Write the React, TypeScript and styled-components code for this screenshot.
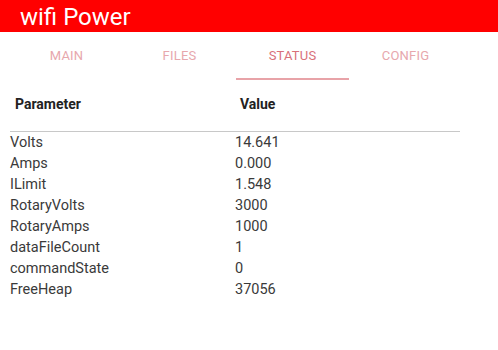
import styled, { createGlobalStyle } from "styled-components";

const GlobalStyle = createGlobalStyle`
  body {
    margin: 0;
    background: #ffffff;
    font-family: Roboto, "Noto Sans", Arial, sans-serif;
  }
`;

const TABS = ["MAIN", "FILES", "STATUS", "CONFIG"];
const ACTIVE = "STATUS";

const ROWS: [string, string][] = [
  ["Volts", "14.641"],
  ["Amps", "0.000"],
  ["ILimit", "1.548"],
  ["RotaryVolts", "3000"],
  ["RotaryAmps", "1000"],
  ["dataFileCount", "1"],
  ["commandState", "0"],
  ["FreeHeap", "37056"],
];

const App = () => {
  return (
    <Page>
      <GlobalStyle />
      <TitleBar>wifi Power</TitleBar>
      <TabBar>
        {TABS.map((t) => (
          <Tab key={t} $active={t === ACTIVE}>
            {t}
          </Tab>
        ))}
      </TabBar>
      <Table>
        <HeadRow>
          <HeadCell>Parameter</HeadCell>
          <HeadCell>Value</HeadCell>
        </HeadRow>
        {ROWS.map(([name, value]) => (
          <Row key={name}>
            <Cell>{name}</Cell>
            <Cell>{value}</Cell>
          </Row>
        ))}
      </Table>
    </Page>
  );
};

export default App;

const Page = styled.div`
  width: 498px;
  height: 350px;
  background: #ffffff;
`;

const TitleBar = styled.div`
  height: 32px;
  background: #ff0000;
  color: #ffffff;
  font-size: 24px;
  line-height: 34px;
  padding-left: 20px;
  box-sizing: border-box;
  overflow: hidden;
`;

const TabBar = styled.div`
  display: flex;
  padding-left: 10px;
  height: 48px;
`;

const Tab = styled.div<{ $active: boolean }>`
  width: 113px;
  display: flex;
  align-items: center;
  justify-content: center;
  box-sizing: border-box;
  font-size: 13px;
  letter-spacing: 0.2px;
  color: ${(p) => (p.$active ? "#d9707a" : "#e7a7ad")};
  border-bottom: 2px solid
    ${(p) => (p.$active ? "#e8a3a8" : "transparent")};
`;

const Table = styled.div`
  width: 450px;
  margin-left: 10px;
  margin-top: 11px;
`;

const HeadRow = styled.div`
  display: grid;
  grid-template-columns: 225px 1fr;
  height: 41px;
  box-sizing: border-box;
  align-items: start;
  padding-top: 5px;
  border-bottom: 1px solid #c8c8c8;
`;

const HeadCell = styled.div`
  padding-left: 5px;
  font-size: 14px;
  line-height: 16px;
  font-weight: bold;
  color: #222222;
`;

const Row = styled.div`
  display: grid;
  grid-template-columns: 225px 1fr;
  height: 21px;
  align-items: center;
  font-size: 14.5px;
  color: #3a3a3a;
`;

const Cell = styled.div``;
